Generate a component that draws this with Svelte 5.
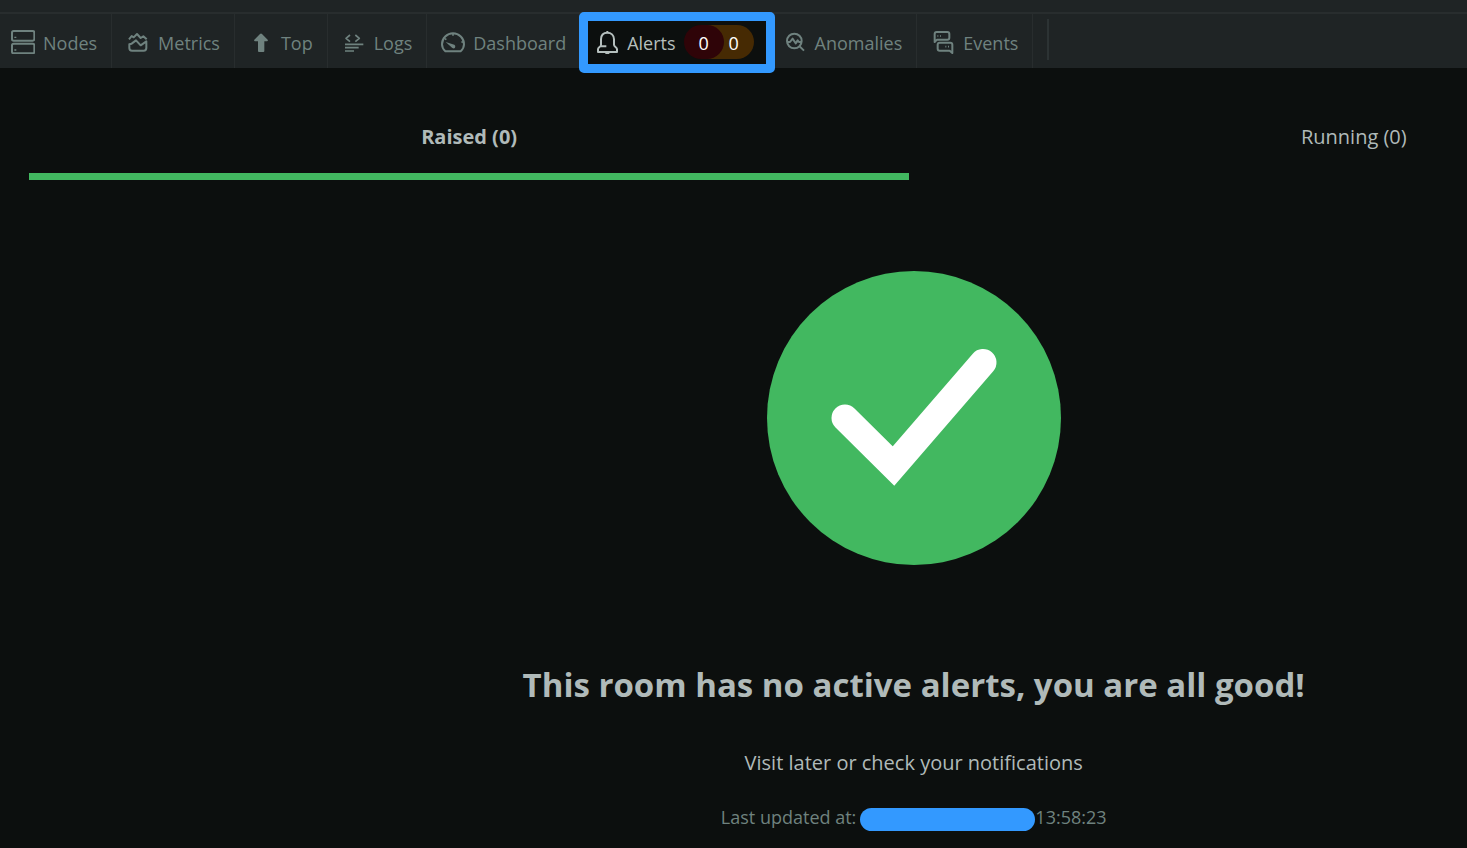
<script>
  let view = $state('Alerts');
  let tab = $state('raised');

  const alerts = { critical: 0, warning: 0 };
  const lists = [
    { id: 'raised', label: 'Raised', count: 0 },
    { id: 'running', label: 'Running', count: 0 }
  ];
  const views = ['Nodes', 'Metrics', 'Top', 'Logs', 'Dashboard', 'Alerts', 'Anomalies', 'Events'];
</script>

{#snippet icon(name)}
  <svg class="icon" viewBox="0 0 72 72" aria-hidden="true">
    {#if name === 'Nodes'}
      <rect x="3" y="3" width="67" height="29" rx="5" />
      <rect x="3" y="41" width="67" height="29" rx="5" />
      <path d="M13 20v4M13 58v4" />
    {:else if name === 'Metrics'}
      <path d="M9 28L17 18L23 22L33 12L44 24L52 19L62 28" />
      <path d="M10 43L17 41L30 31L44 46L61 34V54Q61 62 53 62H18Q10 62 10 54Z" />
    {:else if name === 'Top'}
      <path class="solid" d="M33 12Q36 9 39 12L56 29Q58 34 54 34H46V63Q46 66 43 66H30Q27 66 27 63V34H18Q14 34 16 29Z" />
    {:else if name === 'Logs'}
      <path class="thin" d="M24 15L12 25L24 35M40 15L52 25L40 35M9 43H64M9 53H50M9 63H36" />
    {:else if name === 'Dashboard'}
      <path d="M13 64C6 58 3 51 3 43A33 33 0 0 1 69 43C69 51 66 58 59 64Z" />
      <path class="thin" d="M36 10V17M12 26L16 29M68 36L61 36" />
      <path class="solid" d="M14 36L40 44Q45 47 42 53Q39 57 34 54Z" />
    {:else if name === 'Alerts'}
      <path d="M37 3V8M18 44V28C18 15 26 8 37 8C48 8 57 15 57 28V44C57 51 66 51 66 58V66H9V58C9 51 18 51 18 44ZM14 49H34M31 69H43" />
    {:else if name === 'Anomalies'}
      <circle cx="34" cy="33" r="22" />
      <path d="M50 49L63 62M12 36H21L29 26L38 40L44 31L48 36H56" />
    {:else}
      <path d="M11 36V12Q11 6 17 6H49Q55 6 55 12V23Q55 29 49 29H18Z" />
      <path d="M64 69V44Q64 38 58 38H26Q20 38 20 44V56Q20 62 26 62H56Z" />
      <path class="thin" d="M19 18h3M27 18h3M43 50h3M51 50h3" />
    {/if}
  </svg>
{/snippet}

<header>
  <nav aria-label="Room views">
    {#each views as name}
      <button class="view" class:active={view === name} onclick={() => (view = name)}>
        {@render icon(name)}
        <span class="label">{name}</span>
        {#if name === 'Alerts'}
          <span class="badges">
            <span class="badge critical">{alerts.critical}</span>
            <span class="badge warning">{alerts.warning}</span>
          </span>
        {/if}
      </button>
    {/each}
    <span class="divider"></span>
  </nav>
</header>

<main>
  <div class="tabs" role="tablist">
    {#each lists as list}
      <button
        class="tab"
        class:selected={tab === list.id}
        role="tab"
        aria-selected={tab === list.id}
        onclick={() => (tab = list.id)}
      >
        {list.label} ({list.count})
      </button>
    {/each}
  </div>

  <section>
    <svg class="check" viewBox="0 0 294 294" aria-hidden="true">
      <circle cx="147" cy="147" r="147" />
      <path d="M78 147L126.500 195L216 91.500" />
    </svg>
    <h1>This room has no active alerts, you are all good!</h1>
    <p class="hint">Visit later or check your notifications</p>
    <p class="updated">Last updated at:<span class="redacted"></span>13:58:23</p>
  </section>
</main>

<style>
  :global(body) {
    background: #0c0f0e;
    font-family: 'Open Sans', 'Noto Sans', sans-serif;
    overflow: hidden;
  }

  header {
    padding-top: 12px;
    background: #1f2425;
  }

  nav {
    display: flex;
    height: 54px;
    border-top: 2px solid #282d2e;
  }

  button {
    border: none;
    background: none;
    font-family: inherit;
    cursor: pointer;
  }

  .view {
    position: relative;
    display: flex;
    align-items: center;
    gap: 8px;
    padding: 2px 14px 0;
    border-right: 1px solid #282d2e;
    color: #6f827f;
    font-size: 18px;
    line-height: 24px;
  }

  .view:first-child {
    padding-left: 11px;
  }

  .view.active {
    background: #0c0f0e;
    color: #b5bfbd;
  }

  .view.active::after {
    content: '';
    position: absolute;
    z-index: 1;
    inset: -2px -7px -5px -2px;
    border: 9px solid #3399ff;
    border-radius: 5px;
  }

  .label {
    padding-top: 2px;
  }

  .icon {
    flex: none;
    width: 24px;
    height: 24px;
    fill: none;
    stroke: currentColor;
    stroke-width: 6;
    stroke-linejoin: round;
  }

  .icon .thin {
    stroke-width: 5;
  }

  .icon .solid {
    fill: currentColor;
    stroke: none;
  }

  .badges {
    display: flex;
  }

  .badge {
    width: 40px;
    padding-top: 2px;
    border-radius: 17px;
    color: #fff;
    line-height: 32px;
    text-align: center;
  }

  .critical {
    position: relative;
    z-index: 1;
    background: #2f0408;
  }

  .warning {
    margin-left: -10px;
    border-radius: 0 17px 17px 0;
    background: #462a03;
    box-shadow: -10px 0 #462a03;
  }

  .divider {
    width: 2px;
    margin: 5px 14px 8px;
    background: #2c3334;
  }

  main {
    width: 123%;
    padding: 39px 6px 0 29px;
    box-sizing: border-box;
  }

  .tabs {
    display: grid;
    grid-template-columns: 99fr 100fr;
  }

  .tab {
    padding: 15px 0 21px;
    border-bottom: 7px solid transparent;
    color: #b0bab9;
    font-size: 20px;
    line-height: 30px;
  }

  .tab.selected {
    border-color: #42b860;
    font-weight: 700;
  }

  section {
    display: flex;
    flex-direction: column;
    align-items: center;
    padding-top: 91px;
  }

  .check {
    width: 294px;
    height: 294px;
    fill: #42b860;
  }

  .check path {
    fill: none;
    stroke: #fff;
    stroke-width: 27;
    stroke-linecap: round;
  }

  h1 {
    margin: 96px 0 0;
    color: #b0bab9;
    font-size: 33px;
    line-height: 48px;
  }

  p {
    margin: 0;
  }

  .hint {
    margin-top: 39px;
    color: #b0bab9;
    font-size: 20px;
    line-height: 30px;
  }

  .updated {
    display: flex;
    align-items: center;
    margin-top: 24px;
    color: #6f827f;
    font-size: 18px;
    line-height: 28px;
  }

  .redacted {
    width: 175px;
    height: 23px;
    margin: 6px 0 0 4px;
    border-radius: 12px;
    background: #3399ff;
  }
</style>
